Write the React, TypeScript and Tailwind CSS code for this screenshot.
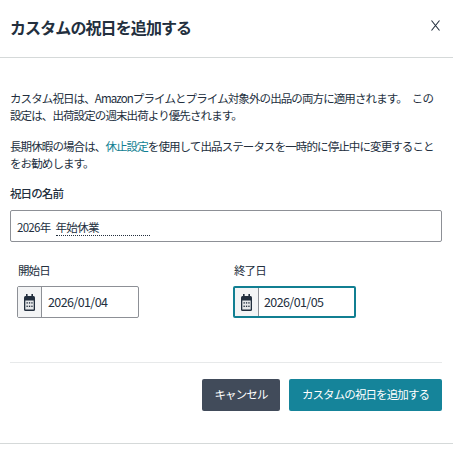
const font = { fontFamily: '"Noto Sans CJK JP", "Noto Sans", sans-serif' };

function CalendarIcon() {
  return (
    <svg width="11" height="17" viewBox="0 0 11 17" fill="none">
      <rect x="0" y="2" width="11" height="15" rx="1.5" fill="#232f3e" />
      <rect x="2" y="0" width="1.6" height="3.5" fill="#232f3e" />
      <rect x="7.4" y="0" width="1.6" height="3.5" fill="#232f3e" />
      <rect x="1.3" y="6.5" width="8.4" height="9" fill="#e6e8ea" />
      <g fill="#232f3e">
        <rect x="2.5" y="8.2" width="1.3" height="1.4" />
        <rect x="4.9" y="8.2" width="1.3" height="1.4" />
        <rect x="7.3" y="8.2" width="1.3" height="1.4" />
        <rect x="2.5" y="11.6" width="1.3" height="1.4" />
        <rect x="4.9" y="11.6" width="1.3" height="1.4" />
        <rect x="7.3" y="11.6" width="1.3" height="1.4" />
      </g>
    </svg>
  );
}

function DateField({ label, value, focused }: { label: string; value: string; focused?: boolean }) {
  return (
    <div className="w-[216px] shrink-0">
      <div className="pl-[1px] text-[11.5px] tracking-[-0.9px] leading-[16px] text-[#232f3e] mb-[8px]">{label}</div>
      <div
        className={
          focused
            ? "flex w-[123px] h-[32px] rounded-[2px] border-2 border-[#117f92] bg-white"
            : "flex w-[122px] h-[32px] rounded-[2px] border border-[#8d9096] bg-white"
        }
      >
        <div className="w-[24px] shrink-0 flex items-center justify-center bg-[#f3f4f5] border-r border-[#8d9096]">
          <CalendarIcon />
        </div>
        <div className={focused ? "pl-[5px] flex items-center text-[12.5px] tracking-[-0.6px] text-[#232f3e]" : "pl-[6px] flex items-center text-[12.5px] tracking-[-0.6px] text-[#232f3e]"}>{value}</div>
      </div>
    </div>
  );
}

export default function App() {
  return (
    <div className="w-[453px] h-[453px] bg-white overflow-hidden text-[#232f3e]" style={font}>
      <div className="h-[58px] border-b border-[#d5d9d9] pl-[10px] pr-[13px] flex items-start justify-between">
        <h1 className="mt-[15px] text-[16px] tracking-[-0.9px] leading-[24px] font-bold text-[#232f3e]">カスタムの祝日を追加する</h1>
        <svg className="mt-[20px]" width="9" height="11" viewBox="0 0 9 11" fill="none" stroke="#232f3e" strokeWidth="1.1">
          <path d="M0.5 0.5l8 10M8.5 0.5l-8 10" />
        </svg>
      </div>
      <div className="pl-[10px] pr-[11px] pt-[32px]">
        <p className="text-[11.5px] tracking-[-0.9px] leading-[17px]">
          カスタム祝日は、Amazonプライムとプライム対象外の出品の両方に適用されます。<span className="ml-[5px]">この</span>
          <br />
          設定は、出荷設定の週末出荷より優先されます。
        </p>
        <p className="mt-[14px] text-[11.5px] tracking-[-0.9px] leading-[17px]">
          長期休暇の場合は、<span className="text-[#117f92]">休止設定</span>を使用して出品ステータスを一時的に停止中に変更すること
          <br />
          をお勧めします。
        </p>
        <div className="mt-[13px] text-[11.5px] font-medium tracking-[-0.9px] leading-[16px]">祝日の名前</div>
        <div className="mt-[9px] h-[32px] border border-[#8d9096] rounded-[2px] pl-[6px] flex items-start pt-[8px] text-[11.5px] tracking-[-0.7px] leading-[16px]">
          <span>2026年</span>
          <span className="ml-[5px] w-[94px] h-[17px] border-b border-dotted border-[#232f3e]">年始休業</span>
        </div>
        <div className="mt-[20px] pl-[7px] flex">
          <DateField label="開始日" value="2026/01/04" />
          <DateField label="終了日" value="2026/01/05" focused />
        </div>
        <div className="mt-[44px] border-t border-[#e7e9ea] pt-[16px] flex justify-end gap-[9px]">
          <button className="h-[32px] w-[78px] rounded-[2px] bg-[#414b5a] text-white text-[11.5px] tracking-[-0.9px]">キャンセル</button>
          <button className="h-[32px] w-[153px] rounded-[2px] bg-[#15849a] text-white text-[11.5px] tracking-[-0.9px]">カスタムの祝日を追加する</button>
        </div>
      </div>
      <div className="mt-[32px] border-t border-[#d5d9d9]" />
    </div>
  );
}
